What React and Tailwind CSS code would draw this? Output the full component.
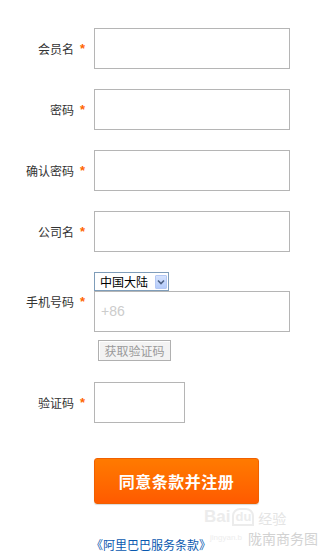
import React from "react";

const cjk = { fontFamily: '"Noto Sans CJK SC", "Liberation Sans", sans-serif' };

function Label({ text }) {
  return (
    <div className="flex items-center shrink-0">
      <div className="w-[74px] text-right text-[12px] leading-[16px] text-[#333]" style={cjk}>{text}</div>
      <div className="w-[20px] pl-[6px] text-[13px] leading-[16px] text-[#ff6600] font-bold" style={{ fontFamily: '"Liberation Sans", sans-serif' }}>*</div>
    </div>
  );
}

function Field({ label, width = "w-[196px]" }) {
  return (
    <div className="flex items-center">
      <Label text={label} />
      <input className={`${width} h-[41px] border border-[#b5b5b5] bg-white outline-none`} />
    </div>
  );
}

export default function App() {
  return (
    <div className="relative w-[321px] h-[553px] overflow-hidden bg-white" style={cjk}>
      <div className="flex flex-col pt-[28px]">
        <div className="flex flex-col gap-[20px]">
          <Field label="会员名" />
          <Field label="密码" />
          <Field label="确认密码" />
          <Field label="公司名" />
          <div className="flex items-center">
            <Label text="手机号码" />
            <div className="flex flex-col">
              <div className="w-[75px] h-[19px] border border-[#7f9db9] bg-white flex items-center justify-between pl-[5px] pr-[1px]">
                <span className="text-[12px] leading-[14px] text-black" style={cjk}>中国大陆</span>
                <span className="w-[12px] h-[14px] rounded-[1px] border border-[#b4c8f4] bg-gradient-to-b from-[#d6e3fd] to-[#b4cbfa] flex items-center justify-center">
                  <svg width="8" height="6" viewBox="0 0 8 6"><path d="M1 1.5 L4 4.5 L7 1.5" fill="none" stroke="#4d6185" strokeWidth="1.6" /></svg>
                </span>
              </div>
              <div className="w-[196px] h-[41px] border border-[#b5b5b5] bg-white flex items-center pl-[6px]">
                <span className="text-[14px] text-[#cccccc]" style={{ fontFamily: '"Liberation Sans", sans-serif' }}>+86</span>
              </div>
            </div>
          </div>
        </div>
        <div className="flex pl-[98px] mt-[8px]">
          <div className="w-[73px] h-[21px] border border-[#b0b0b0] bg-[#f3f3f3] flex items-center justify-center shadow-[inset_1px_1px_0_#ffffff]">
            <span className="text-[12px] leading-[14px] text-[#9a9a9a]" style={cjk}>获取验证码</span>
          </div>
        </div>
        <div className="mt-[21px]">
          <Field label="验证码" width="w-[91px]" />
        </div>
        <div className="pl-[94px] mt-[35px]">
          <div className="w-[165px] h-[46px] rounded-[3px] bg-gradient-to-b from-[#ff7a00] to-[#ff5a00] border border-[#f06000] shadow-[0_1px_1px_rgba(0,0,0,0.15)] flex items-center justify-center">
            <span className="text-[16px] font-bold text-white tracking-[0.5px]" style={cjk}>同意条款并注册</span>
          </div>
        </div>
        <div className="pl-[91px] mt-[27px]">
          <span className="text-[12px] leading-[16px] text-[#0a59b0]" style={cjk}>《阿里巴巴服务条款》</span>
        </div>
      </div>
      <div className="absolute left-[204px] top-[508px] pointer-events-none select-none">
        <div className="flex items-end gap-[2px]">
          <span className="text-[17px] leading-[18px] font-bold text-[#ececec]" style={{ fontFamily: '"Liberation Sans", sans-serif' }}>Bai</span>
          <span className="text-[13px] leading-[14px] font-bold text-[#ececec] border-[2px] border-[#ececec] rounded-t-[8px] px-[1px]" style={{ fontFamily: '"Liberation Sans", sans-serif' }}>du</span>
          <span className="text-[14px] leading-[16px] text-[#e4e4e4] ml-[2px]" style={cjk}>经验</span>
        </div>
        <div className="flex items-center mt-[4px]">
          <span className="text-[8px] leading-[10px] text-[#ededed] w-[38px] ml-[6px]" style={{ fontFamily: '"Liberation Sans", sans-serif' }}>jingyan.b</span>
          <span className="text-[14px] leading-[16px] text-[#d2d2d2]" style={cjk}>陇南商务图</span>
        </div>
      </div>
    </div>
  );
}
